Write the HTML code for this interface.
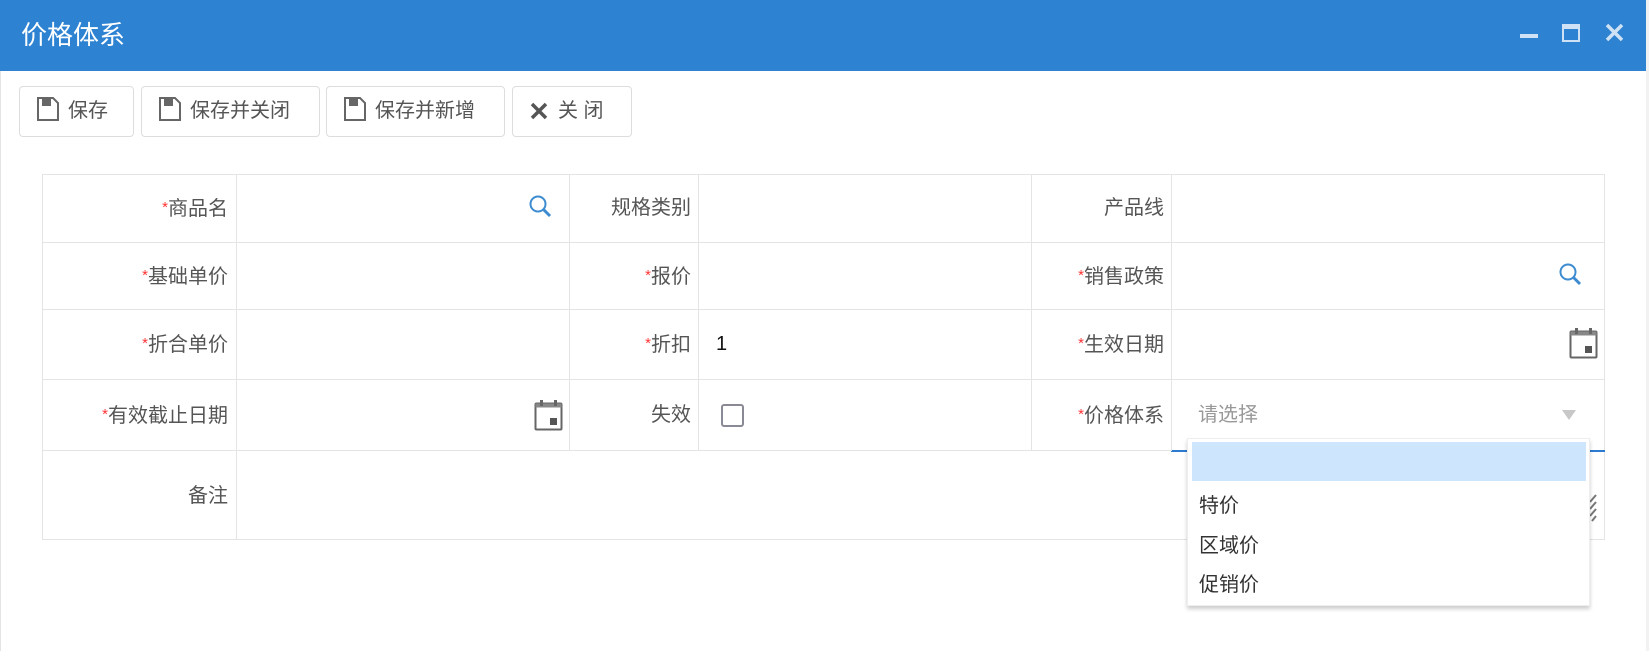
<!DOCTYPE html>
<html><head><meta charset="utf-8"><style>
*{box-sizing:border-box;margin:0;padding:0}
body{width:1649px;height:651px;background:#fff;font-family:"Liberation Sans","Noto Sans CJK SC",sans-serif;position:relative;overflow:hidden;color:#555}
.title{position:absolute;left:0;top:0;width:1646px;height:71px;background:#2d82d2;color:#fff;font-size:26px;line-height:71px;padding-left:21px}
.win{position:absolute;left:0;top:71px;width:1646px;height:580px;border-left:1px solid #e4e4e4}
.edge{position:absolute;left:1646px;top:0;width:3px;height:651px;background:#f2f2f2}
.btn{position:absolute;top:86px;height:51px;border:1px solid #ddd;border-radius:4px;font-size:20px;line-height:49px;color:#555;padding-left:16px;background:#fff}
.btn svg{vertical-align:-4px;margin-right:9px}
.t{position:absolute;left:42px;top:174px;width:1563px;height:366px;border:1px solid #e4e4e4}
.h{position:absolute;height:1px;background:#e4e4e4}
.v{position:absolute;width:1px;background:#e4e4e4}
.l{position:absolute;font-size:20px;color:#555;text-align:right;line-height:24px}
.l i{color:#f33;font-style:normal;font-size:15px;vertical-align:3px}
.dd{position:absolute;left:1187px;top:438px;width:403px;height:168px;background:#fff;border:1px solid #eee;box-shadow:0 3px 4px rgba(0,0,0,.2)}
.dd div{font-size:20px;color:#333;position:absolute;left:11px}
</style></head><body>
<div class="title">价格体系</div>
<svg style="position:absolute;left:1519px;top:23px" width="110" height="24">
<rect x="1" y="11" width="18" height="4" fill="#cfe2f5"/>
<rect x="44" y="2" width="16" height="16" fill="none" stroke="#cfe2f5" stroke-width="2"/><rect x="44" y="2" width="16" height="4" fill="#cfe2f5"/>
<path d="M88 2L103 17M103 2L88 17" stroke="#cfe2f5" stroke-width="3.5"/>
</svg>
<div class="win"></div>
<div class="edge"></div>
<div class="btn" style="left:19px;width:115px"><svg width="23" height="24"><path d="M2 1h15l5 5v17H2z" fill="none" stroke="#666" stroke-width="2"/><rect x="6" y="1" width="9" height="8" fill="#666"/></svg>保存</div>
<div class="btn" style="left:141px;width:179px"><svg width="23" height="24"><path d="M2 1h15l5 5v17H2z" fill="none" stroke="#666" stroke-width="2"/><rect x="6" y="1" width="9" height="8" fill="#666"/></svg>保存并关闭</div>
<div class="btn" style="left:326px;width:179px"><svg width="23" height="24"><path d="M2 1h15l5 5v17H2z" fill="none" stroke="#666" stroke-width="2"/><rect x="6" y="1" width="9" height="8" fill="#666"/></svg>保存并新增</div>
<div class="btn" style="left:512px;width:120px"><svg width="20" height="20"><path d="M3 3L17 17M17 3L3 17" stroke="#555" stroke-width="3.5"/></svg>关 闭</div>
<div class="t"></div>
<div class="h" style="left:42px;top:242px;width:1563px"></div>
<div class="h" style="left:42px;top:309px;width:1563px"></div>
<div class="h" style="left:42px;top:379px;width:1563px"></div>
<div class="h" style="left:42px;top:450px;width:1563px"></div>
<div class="h" style="left:1171px;top:450px;width:434px;height:2px;background:#2d7bd0"></div>
<div class="v" style="left:236px;top:174px;height:366px"></div>
<div class="v" style="left:569px;top:174px;height:277px"></div>
<div class="v" style="left:698px;top:174px;height:277px"></div>
<div class="v" style="left:1031px;top:174px;height:277px"></div>
<div class="v" style="left:1171px;top:174px;height:277px"></div>
<div class="l" style="left:42px;width:186px;top:196px"><i>*</i>商品名</div>
<div class="l" style="left:569px;width:122px;top:196px">规格类别</div>
<div class="l" style="left:1031px;width:133px;top:196px">产品线</div>
<div class="l" style="left:42px;width:186px;top:264px"><i>*</i>基础单价</div>
<div class="l" style="left:569px;width:122px;top:264px"><i>*</i>报价</div>
<div class="l" style="left:1031px;width:133px;top:264px"><i>*</i>销售政策</div>
<div class="l" style="left:42px;width:186px;top:332px"><i>*</i>折合单价</div>
<div class="l" style="left:569px;width:122px;top:332px"><i>*</i>折扣</div>
<div class="l" style="left:716px;top:332px;color:#111">1</div>
<div class="l" style="left:1031px;width:133px;top:332px"><i>*</i>生效日期</div>
<div class="l" style="left:42px;width:186px;top:403px"><i>*</i>有效截止日期</div>
<div class="l" style="left:569px;width:122px;top:403px">失效</div>
<div class="l" style="left:1031px;width:133px;top:403px"><i>*</i>价格体系</div>
<div class="l" style="left:1198px;top:403px;color:#999">请选择</div>
<div class="l" style="left:42px;width:186px;top:484px">备注</div>
<svg style="position:absolute;left:528px;top:194px" width="26" height="26"><circle cx="10" cy="10" r="7.5" fill="none" stroke="#3d8bd0" stroke-width="2"/><path d="M15 15L22 22" stroke="#3d8bd0" stroke-width="3"/></svg>
<svg style="position:absolute;left:1558px;top:262px" width="26" height="26"><circle cx="10" cy="10" r="7.5" fill="none" stroke="#3d8bd0" stroke-width="2"/><path d="M15 15L22 22" stroke="#3d8bd0" stroke-width="3"/></svg>
<svg style="position:absolute;left:534px;top:400px" width="30" height="32"><rect x="1.5" y="3.5" width="26" height="26" rx="1" fill="#fff" stroke="#666" stroke-width="2"/><rect x="1.5" y="3.5" width="26" height="4" fill="#888"/><rect x="6" y="0" width="3" height="6" fill="#666"/><rect x="20" y="0" width="3" height="6" fill="#666"/><rect x="16" y="18" width="7" height="7" fill="#555"/></svg>
<svg style="position:absolute;left:1569px;top:328px" width="30" height="32"><rect x="1.5" y="3.5" width="26" height="26" rx="1" fill="#fff" stroke="#666" stroke-width="2"/><rect x="1.5" y="3.5" width="26" height="4" fill="#888"/><rect x="6" y="0" width="3" height="6" fill="#666"/><rect x="20" y="0" width="3" height="6" fill="#666"/><rect x="16" y="18" width="7" height="7" fill="#555"/></svg>
<div style="position:absolute;left:721px;top:404px;width:23px;height:23px;border:2.5px solid #8a8a96;border-radius:3px"></div>
<svg style="position:absolute;left:1561px;top:408px" width="16" height="14"><path d="M1 2h14l-7 10z" fill="#c8c8c8"/></svg>
<svg style="position:absolute;left:1588px;top:494px" width="10" height="28"><path d="M8 1L2 8M8 8L2 15M8 15L2 22M8 22L4 27" stroke="#777" stroke-width="2"/></svg>
<div class="dd">
<div style="left:4px;top:3px;width:394px;height:39px;background:#cde6fd"></div>
<div style="top:50px">特价</div>
<div style="top:90px">区域价</div>
<div style="top:129px">促销价</div>
</div>
</body></html>
